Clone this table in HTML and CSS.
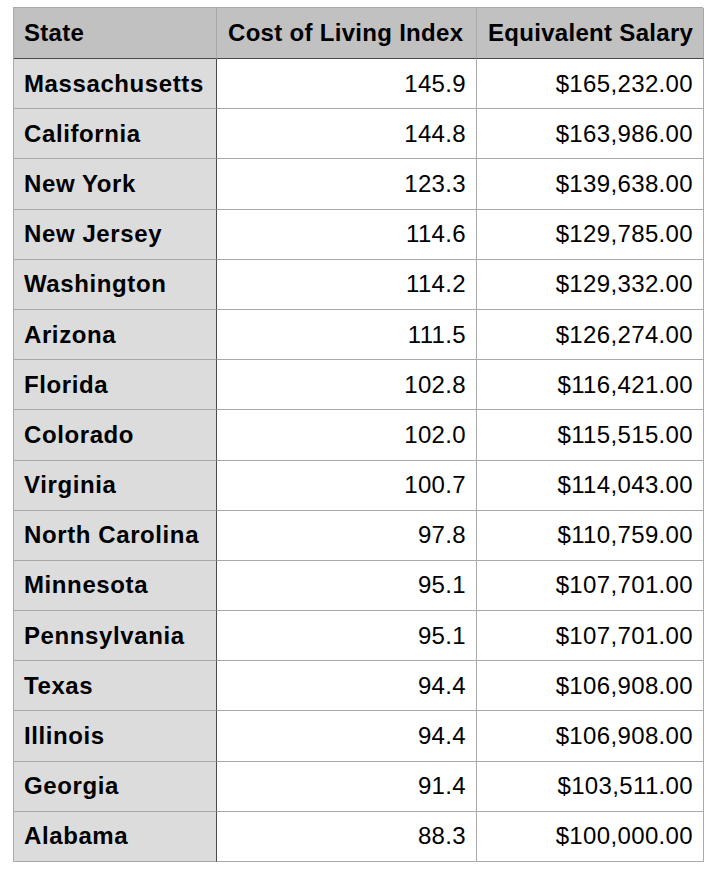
FILE: index.html
```html
<!DOCTYPE html>
<html>
<head>
<meta charset="utf-8">
<link rel="stylesheet" href="styles.css">
</head>
<body>
<div class="sheet">
  <div class="cell head first">State</div>
  <div class="cell head">Cost of Living Index</div>
  <div class="cell head">Equivalent Salary</div>

  <div class="cell name">Massachusetts</div><div class="cell num">145.9</div><div class="cell num">$165,232.00</div>
  <div class="cell name">California</div><div class="cell num">144.8</div><div class="cell num">$163,986.00</div>
  <div class="cell name">New York</div><div class="cell num">123.3</div><div class="cell num">$139,638.00</div>
  <div class="cell name">New Jersey</div><div class="cell num">114.6</div><div class="cell num">$129,785.00</div>
  <div class="cell name">Washington</div><div class="cell num">114.2</div><div class="cell num">$129,332.00</div>
  <div class="cell name">Arizona</div><div class="cell num">111.5</div><div class="cell num">$126,274.00</div>
  <div class="cell name">Florida</div><div class="cell num">102.8</div><div class="cell num">$116,421.00</div>
  <div class="cell name">Colorado</div><div class="cell num">102.0</div><div class="cell num">$115,515.00</div>
  <div class="cell name">Virginia</div><div class="cell num">100.7</div><div class="cell num">$114,043.00</div>
  <div class="cell name">North Carolina</div><div class="cell num">97.8</div><div class="cell num">$110,759.00</div>
  <div class="cell name">Minnesota</div><div class="cell num">95.1</div><div class="cell num">$107,701.00</div>
  <div class="cell name">Pennsylvania</div><div class="cell num">95.1</div><div class="cell num">$107,701.00</div>
  <div class="cell name">Texas</div><div class="cell num">94.4</div><div class="cell num">$106,908.00</div>
  <div class="cell name">Illinois</div><div class="cell num">94.4</div><div class="cell num">$106,908.00</div>
  <div class="cell name">Georgia</div><div class="cell num">91.4</div><div class="cell num">$103,511.00</div>
  <div class="cell name">Alabama</div><div class="cell num">88.3</div><div class="cell num">$100,000.00</div>
</div>
</body>
</html>
```
FILE: styles.css
```css
html, body {
  margin: 0;
  padding: 0;
  background: #ffffff;
}
body {
  padding: 7px 0 0 13px;
  font-family: "Liberation Sans", Arial, sans-serif;
  color: #000;
}
.sheet {
  display: grid;
  grid-template-columns: 203px 260px 227px;
  grid-template-rows: 51px repeat(16, 50.2px);
  width: 690px;
  border-top: 1px solid #a9a9a9;
  border-left: 1px solid #a9a9a9;
  box-sizing: border-box;
}
.cell {
  box-sizing: border-box;
  border-right: 1px solid #a9a9a9;
  border-bottom: 1px solid #a9a9a9;
  display: flex;
  align-items: center;
  padding: 0 11px 0 10px;
  white-space: nowrap;
}
.head {
  background: #c1c1c1;
  font-weight: bold;
  font-size: 24px;
  letter-spacing: 0.3px;
  border-bottom: 1px solid #4a4a4a;
  padding-left: 11px;
}
.head.first {
  padding-left: 10px;
}
.name {
  background: #dcdcdc;
  font-weight: bold;
  font-size: 24px;
  letter-spacing: 0.6px;
  border-right: 1px solid #4a4a4a;
}
.num {
  justify-content: flex-end;
  font-size: 24px;
  letter-spacing: 0.35px;
  padding-right: 10px;
}
```
